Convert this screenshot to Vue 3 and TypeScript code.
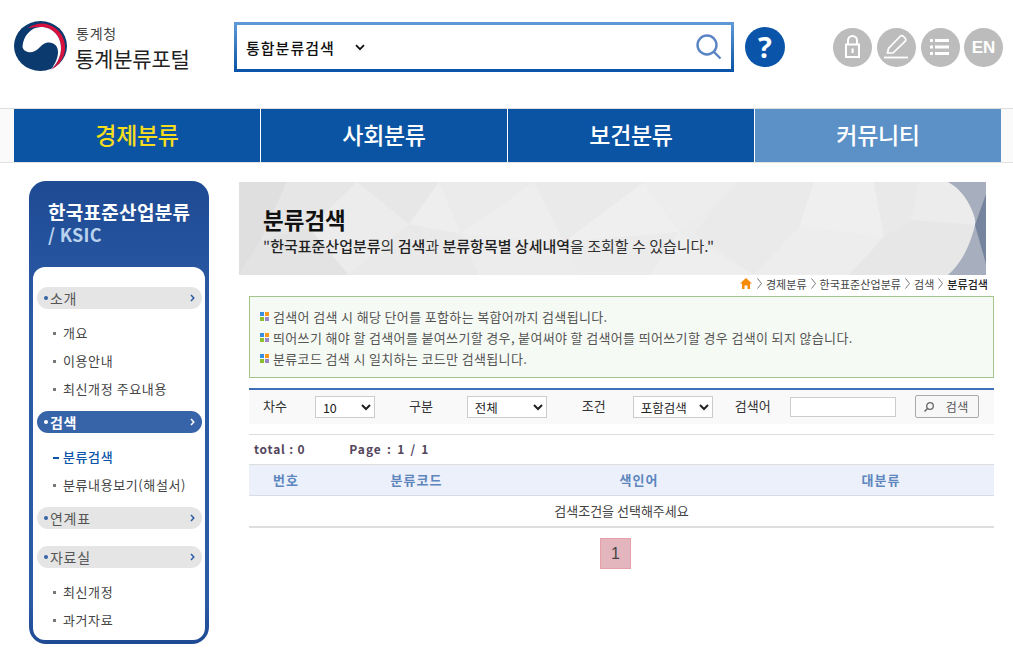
<script setup lang="ts">
const navItems = [
  { label: '경제분류', cls: 'nav__item--on' },
  { label: '사회분류', cls: '' },
  { label: '보건분류', cls: '' },
  { label: '커뮤니티', cls: 'nav__item--light' },
];

const sideMenu = [
  { title: '소개', on: false, subs: ['개요', '이용안내', '최신개정 주요내용'] },
  { title: '검색', on: true, subs: ['분류검색', '분류내용보기(해설서)'] },
  { title: '연계표', on: false, subs: [] },
  { title: '자료실', on: false, subs: ['최신개정', '과거자료'] },
];

const crumbs = ['경제분류', '한국표준산업분류', '검색'];

const notes = [
  '검색어 검색 시 해당 단어를 포함하는 복합어까지 검색됩니다.',
  '띄어쓰기 해야 할 검색어를 붙여쓰기할 경우, 붙여써야 할 검색어를 띄어쓰기할 경우 검색이 되지 않습니다.',
  '분류코드 검색 시 일치하는 코드만 검색됩니다.',
];

// banner background facets: [path, fill]
const facets = [
  ['M0 0h48L22 58 0 93Z', '#d6d6d6'],
  ['M48 0h70L70 46 22 58Z', '#e2e2e2'],
  ['M22 58 70 46 110 93H0Z', '#dcdcdc'],
  ['M118 0l52 42-60 51-40-47Z', '#ececec'],
  ['M118 0h82l-30 42Z', '#e4e4e4'],
  ['M200 0l22 52-52-10Z', '#f0f0f0'],
  ['M170 42l52 10 18 41H110Z', '#e8e8e8'],
  ['M200 0h95l-73 52Z', '#ebebeb'],
  ['M295 0l30 60-103-8Z', '#f1f1f1'],
  ['M222 52l103 8 15 33H240Z', '#ededed'],
  ['M295 0h110l-80 60Z', '#e9e9e9'],
  ['M405 0l35 50-115 10Z', '#f3f3f3'],
  ['M325 60l115-10-30 43H340Z', '#ebebeb'],
  ['M405 0h95l-60 50Z', '#eeeeee'],
  ['M500 0l-60 50 75 43H410l30-43Z', '#f0f0f0'],
  ['M500 0h75l-15 45-45 48-60-43Z', '#e9e9e9'],
  ['M575 0h60l10 55-85-10Z', '#f2f2f2'],
  ['M560 45l85 10-35 38h-95Z', '#eeeeee'],
  ['M635 0h45l-8 38-27 17Z', '#e7e7e7'],
  ['M680 0h34c10 8 17 20 22 43l-64-5Z', '#ececec'],
  ['M645 55l27-17 64 5-8 50H610Z', '#e4e4e4'],
];
</script>

<template>
  <div class="page">
    <header class="top">
      <div class="logo">
        <svg class="logo__mark" viewBox="0 0 53 50" width="53" height="50">
          <ellipse cx="26.500" cy="25" rx="26.500" ry="25" fill="#0b3a6e" />
          <path d="M14 7C20 3 28 1.500 34 3.500 46 7 52 18 51 29 50 38 44 45 37 49 43 43 47 35 47 27 47 15 38 6 27 6 22 6 18 6.500 14 7Z" fill="#d8123f" />
          <path d="M8.500 26C9 15 17 6 27 6 38 6 47 15 47 27 47 35 43 43 37 48.500 41 43 44 37 44 31 44 25 40 21.500 35 21.500 30 21.500 28 24 25 27 22 30 18 32 14 31 11 30.500 9 28.500 8.500 26Z" fill="#fff" />
        </svg>
        <div class="logo__text">
          <span class="logo__sub">통계청</span>
          <span class="logo__main">통계분류포털</span>
        </div>
      </div>

      <div class="search">
        <span class="search__type">통합분류검색</span>
        <svg class="search__chev" viewBox="0 0 10 7" width="10" height="7">
          <path d="M1 1.200 5 5.200 9 1.200" fill="none" stroke="#111" stroke-width="1.800" />
        </svg>
        <svg class="search__icon" viewBox="0 0 26 26" width="26" height="26">
          <circle cx="11" cy="11" r="9.500" fill="none" stroke="#5b84c4" stroke-width="2.400" />
          <path d="M18 18l6.500 6.500" stroke="#5b84c4" stroke-width="2.400" fill="none" />
        </svg>
      </div>

      <div class="help">?</div>

      <div class="tools">
        <span class="tool">
          <svg viewBox="0 0 39 39" width="39" height="39">
            <path d="M15 16v-3.500a4.500 4.500 0 0 1 9 0V16" fill="none" stroke="#fff" stroke-width="2" />
            <rect x="13" y="16.500" width="13" height="12.500" fill="none" stroke="#fff" stroke-width="2" />
            <rect x="18.500" y="20.500" width="2.200" height="4.500" fill="#fff" />
          </svg>
        </span>
        <span class="tool">
          <svg viewBox="0 0 39 39" width="39" height="39">
            <path d="M10.500 25l1-4.500L23 8.500c1-1 2.500-1 3.500 0l1.500 1.500c1 1 1 2.300 0 3.300L16 25Z" fill="none" stroke="#fff" stroke-width="1.700" />
            <path d="M7 29.500h24" stroke="#fff" stroke-width="1.800" />
          </svg>
        </span>
        <span class="tool">
          <svg viewBox="0 0 39 39" width="39" height="39">
            <path d="M9 12.500h3M9 19h3M9 25.500h3M14 12.500h14M14 19h14M14 25.500h14" stroke="#fff" stroke-width="2.800" fill="none" />
          </svg>
        </span>
        <span class="tool tool--text">EN</span>
      </div>
    </header>

    <nav class="nav">
      <div class="nav__inner">
        <a v-for="item in navItems" :key="item.label" class="nav__item" :class="item.cls">{{ item.label }}</a>
      </div>
    </nav>

    <div class="body">
      <aside class="side">
        <h2 class="side__title">한국표준산업분류<span>/ KSIC</span></h2>
        <div class="side__box">
          <div v-for="menu in sideMenu" :key="menu.title" class="group">
            <div class="group__head" :class="{ 'group__head--on': menu.on }">
              <span class="group__dot"></span>
              <span class="group__name">{{ menu.title }}</span>
              <svg class="group__arrow" viewBox="0 0 5 8" width="5" height="8">
                <path d="M1 1l2.800 3L1 7" fill="none" stroke="currentColor" stroke-width="1.500" />
              </svg>
            </div>
            <ul v-if="menu.subs.length" class="subs">
              <li v-for="sub in menu.subs" :key="sub" class="subs__item" :class="{ 'subs__item--on': sub === '분류검색' }">{{ sub }}</li>
            </ul>
          </div>
        </div>
      </aside>

      <main class="main">
        <section class="banner">
          <svg class="banner__bg" viewBox="0 0 747 93" width="747" height="93">
            <rect width="747" height="93" fill="#ececec" />
            <g opacity=".55">
              <path v-for="f in facets" :key="f[0]" :d="f[0]" :fill="f[1]" />
            </g>
            <path d="M709 0h38v93h-38c10-9 21-24 27-50 1-5-1-10-4-17-5-11-12-20-23-26Z" fill="#a7aebd" />
            <path d="M747 12v70l-11-39Z" fill="#76849e" />
          </svg>
          <div class="banner__text">
            <h1>분류검색</h1>
            <p>"<b>한국표준산업분류</b>의 <b>검색</b>과 <b>분류항목별 상세내역</b>을 조회할 수 있습니다."</p>
          </div>
        </section>

        <div class="crumbs">
          <svg class="crumbs__home" viewBox="0 0 12 11" width="12" height="11">
            <path d="M6 0 12 5.500H10V11H7.500V7.500h-3V11H2V5.500H0Z" fill="#f58a0b" />
          </svg>
          <template v-for="c in crumbs" :key="c">
            <svg class="crumbs__sep" viewBox="0 0 5 11" width="5" height="11">
              <path d="M.5 .5 4.500 5.500.5 10.500" fill="none" stroke="#666" stroke-width=".9" />
            </svg>
            <span>{{ c }}</span>
          </template>
          <svg class="crumbs__sep" viewBox="0 0 5 11" width="5" height="11">
            <path d="M.5 .5 4.500 5.500.5 10.500" fill="none" stroke="#666" stroke-width=".9" />
          </svg>
          <b>분류검색</b>
        </div>

        <div class="content">
          <div class="notes">
            <p v-for="note in notes" :key="note" class="notes__row">
              <span class="notes__icon"><i></i><i></i><i></i><i></i></span>{{ note }}
            </p>
          </div>

          <form class="filter" @submit.prevent>
            <label class="filter__label filter__label--first">차수</label>
            <select class="filter__sel filter__sel--num"><option>10</option></select>
            <label class="filter__label filter__label--kind">구분</label>
            <select class="filter__sel filter__sel--kind"><option>전체</option></select>
            <label class="filter__label filter__label--cond">조건</label>
            <select class="filter__sel filter__sel--cond"><option>포함검색</option></select>
            <label class="filter__label filter__label--word">검색어</label>
            <input class="filter__input" type="text" />
            <button class="filter__btn" type="button">
              <svg viewBox="0 0 12 12" width="12" height="12">
                <circle cx="7" cy="5" r="3.300" fill="none" stroke="#666" stroke-width="1.300" />
                <path d="M4.500 7.500 1.500 10.500" stroke="#666" stroke-width="1.500" />
              </svg>
              검색
            </button>
          </form>

          <div class="summary">
            <span class="summary__total">total : 0</span>
            <span class="summary__page">Page : 1 / 1</span>
          </div>

          <table class="result">
            <thead>
              <tr>
                <th class="col-no">번호</th>
                <th class="col-code">분류코드</th>
                <th class="col-word">색인어</th>
                <th>대분류</th>
              </tr>
            </thead>
            <tbody>
              <tr><td colspan="4">검색조건을 선택해주세요</td></tr>
            </tbody>
          </table>

          <div class="pager"><span>1</span></div>
        </div>
      </main>
    </div>
  </div>
</template>

<style>
html,
body {
  background: #fff;
}
</style>

<style scoped>
.page {
  width: 1013px;
  font-family: "Noto Sans CJK KR", "Liberation Sans", sans-serif;
  color: #333;
}

.top {
  display: flex;
  align-items: flex-start;
  height: 108px;
  box-sizing: border-box;
  padding: 21px 0 0 14px;
}

.logo {
  display: flex;
  width: 220px;
}

.logo__mark {
  flex: none;
}

.logo__text {
  display: flex;
  flex-direction: column;
  margin-left: 8px;
}

.logo__sub {
  margin-top: 3px;
  margin-left: 1px;
  color: #444;
  font-size: 14px;
  line-height: 18px;
  letter-spacing: 0.8px;
}

.logo__main {
  margin-top: 4px;
  color: #222;
  font-size: 21px;
  line-height: 24px;
  letter-spacing: -0.2px;
}

.search {
  display: flex;
  align-items: center;
  width: 500px;
  height: 50px;
  box-sizing: border-box;
  margin-top: 1px;
  padding-left: 9px;
  border: 3px solid;
  border-image: linear-gradient(#5f98d6, #0a55a9) 1;
}

.search__type {
  color: #111;
  font-size: 15px;
  font-weight: 500;
  letter-spacing: 1px;
}

.search__chev {
  margin-left: 20px;
}

.search__icon {
  margin-left: auto;
  margin-right: 9px;
}

.help {
  width: 40px;
  height: 40px;
  margin: 6px 0 0 11px;
  border-radius: 50%;
  background: #0a55a9;
  color: #fff;
  font: 700 29px/40px "Open Sans", sans-serif;
  text-align: center;
}

.tools {
  display: flex;
  gap: 5px;
  margin: 7px 0 0 48px;
}

.tool {
  width: 39px;
  height: 39px;
  border-radius: 50%;
  background: #bcbcbc;
  color: #fff;
}

.tool svg {
  display: block;
}

.tool--text {
  margin-left: -1px;
  font: 700 17px/39px "Liberation Sans", sans-serif;
  text-align: center;
}

.nav {
  height: 55px;
  box-sizing: border-box;
  border-top: 1px solid #ddd;
  border-bottom: 1px solid #e3e3e3;
  background: #fafafa;
}

.nav__inner {
  display: flex;
  gap: 1px;
  width: 987px;
  height: 53px;
  margin-left: 14px;
  background: #fff;
}

.nav__item {
  flex: 1;
  background: #0a54a3;
  color: #fff;
  font-size: 23px;
  font-weight: 500;
  line-height: 50px;
  text-align: center;
  letter-spacing: -0.3px;
}

.nav__item--on {
  color: #f5dc1c;
}

.nav__item--light {
  background: #5b91c6;
}

.body {
  display: flex;
  align-items: flex-start;
  padding: 18px 0 0 29px;
}

.side {
  display: flex;
  flex: none;
  flex-direction: column;
  width: 180px;
  height: 463px;
  box-sizing: border-box;
  padding: 0 4px 4px;
  border-radius: 17px;
  background: linear-gradient(#1e4a93, #2c5ba6 30%, #2c5ba6 90%, #1e4a93);
}

.side__title {
  flex: none;
  height: 86px;
  box-sizing: border-box;
  margin: 0;
  padding: 19px 0 0 15px;
  color: #fff;
  font-size: 19px;
  font-weight: 700;
  line-height: 24px;
  letter-spacing: 0.3px;
}

.side__title span {
  display: block;
  margin-top: -2px;
  color: #b9d3ee;
  font-size: 18px;
  font-weight: 700;
  line-height: 24px;
}

.side__box {
  flex: 1;
  min-height: 0;
  box-sizing: border-box;
  padding: 20px 3px 0 4px;
  border-radius: 12px;
  background: #fff;
}

.group__head {
  display: flex;
  align-items: center;
  height: 22px;
  padding: 0 7px;
  border-radius: 11px;
  background: #e5e5e5;
  color: #555;
  font-size: 14px;
  letter-spacing: 0.7px;
}

.group__head--on {
  background: #3763a9;
  color: #fff;
  font-weight: 700;
}

.group__dot {
  width: 4px;
  height: 4px;
  margin-right: 2px;
  border-radius: 50%;
  background: #3763a9;
}

.group__head--on .group__dot {
  background: #fff;
}

.group__arrow {
  margin-left: auto;
  color: #2c5ba6;
}

.group__head--on .group__arrow {
  color: #fff;
}

.subs {
  margin: 0;
  padding: 10px 0 8px 26px;
  list-style: none;
}

.group:last-child .subs {
  padding-bottom: 0;
}

.group:nth-child(3) {
  margin-bottom: 17px;
}

.subs__item {
  position: relative;
  height: 28px;
  color: #444;
  font-size: 13px;
  line-height: 28px;
  letter-spacing: 0.6px;
}

.subs__item::before {
  content: '';
  position: absolute;
  top: 13px;
  left: -10px;
  width: 3px;
  height: 3px;
  background: #777;
}

.subs__item--on {
  color: #0a55a9;
  font-weight: 500;
}

.subs__item--on::before {
  top: 14px;
  width: 6px;
  height: 2px;
  background: #0a55a9;
}

.main {
  flex: none;
  width: 755px;
  margin-left: 30px;
}

.banner {
  position: relative;
  width: 747px;
  height: 93px;
  margin-top: 1px;
}

.banner__bg {
  position: absolute;
  inset: 0;
}

.banner__text {
  position: relative;
  padding: 24px 0 0 24px;
}

.banner__text h1 {
  margin: 0;
  color: #111;
  font-size: 22.500px;
  font-weight: 700;
  line-height: 27px;
}

.banner__text p {
  margin: 3px 0 0;
  color: #333;
  font-size: 15px;
  line-height: 20px;
}

.banner__text b {
  color: #222;
  font-weight: 500;
}

.crumbs {
  display: flex;
  align-items: center;
  justify-content: flex-end;
  height: 21px;
  box-sizing: border-box;
  padding: 0 6px 4px 0;
  color: #444;
  font-size: 11px;
  letter-spacing: 0.05px;
}

.crumbs__sep {
  margin: 0 4px;
}

.crumbs__home + .crumbs__sep {
  margin-left: 5px;
}

.crumbs b {
  color: #222;
  font-weight: 500;
}

.content {
  margin-left: 10px;
}

.notes {
  height: 82px;
  box-sizing: border-box;
  padding: 9px 10px 0;
  border: 1px solid #a3c48c;
  background: #f6faf4;
}

.notes__row {
  display: flex;
  align-items: center;
  height: 21px;
  margin: 0;
  color: #555;
  font-size: 13px;
  letter-spacing: 0.35px;
}

.notes__icon {
  display: grid;
  grid-template-columns: 4px 4px;
  grid-auto-rows: 4px;
  gap: 1px;
  margin-right: 4px;
}

.notes__icon i:nth-child(1) {
  background: #3b8fe0;
}

.notes__icon i:nth-child(2) {
  background: #f59a1b;
}

.notes__icon i:nth-child(3) {
  background: #8cbf2e;
}

.notes__icon i:nth-child(4) {
  background: #9a86c8;
}

.filter {
  display: flex;
  align-items: center;
  height: 36px;
  box-sizing: border-box;
  margin-top: 10px;
  padding-bottom: 1px;
  border-top: 2px solid #3f6fb8;
  background: #f9f9f9;
  color: #333;
  font-size: 13px;
}

.filter__label {
  flex: none;
  margin-top: -2px;
}

.filter__label--first {
  margin-left: 14px;
}

.filter__label--kind {
  margin-left: 34px;
}

.filter__label--cond {
  margin-left: 35px;
}

.filter__label--word {
  margin-left: 22px;
}

.filter__sel {
  height: 22px;
  box-sizing: border-box;
  padding-left: 3px;
  border: 1px solid #ccc;
  background: #fff;
  color: #222;
  font: 12.500px "Noto Sans CJK KR", sans-serif;
}

.filter__sel--num {
  width: 60px;
  margin-left: 28px;
}

.filter__sel--kind {
  width: 80px;
  margin-left: 34px;
}

.filter__sel--cond {
  width: 80px;
  margin-left: 27px;
}

.filter__input {
  width: 106px;
  height: 20px;
  box-sizing: border-box;
  margin-left: 19px;
  border: 1px solid #ccc;
  background: #fff;
}

.filter__btn {
  display: flex;
  align-items: center;
  gap: 11px;
  width: 64px;
  height: 23px;
  box-sizing: border-box;
  margin-left: 19px;
  padding: 0 0 0 7px;
  border: 1px solid #aaa;
  border-radius: 2px;
  background: #f7f7f7;
  color: #555;
  font: 12px "Noto Sans CJK KR", sans-serif;
  letter-spacing: 0.5px;
}

.summary {
  display: flex;
  gap: 44px;
  height: 31px;
  box-sizing: border-box;
  margin-top: 10px;
  padding-left: 5px;
  border-top: 1px solid #ddd;
  border-bottom: 1px solid #ddd;
  color: #54465c;
  font-size: 12px;
  font-weight: 700;
  line-height: 28px;
}

.summary__total {
  letter-spacing: 0.8px;
}

.summary__page {
  letter-spacing: 1px;
  word-spacing: 1.500px;
}

.result {
  width: 745px;
  border-collapse: collapse;
  table-layout: fixed;
  font-size: 13px;
}

.result th {
  height: 30px;
  box-sizing: border-box;
  padding: 0;
  border-bottom: 1px solid #d8dce4;
  background: #ebf0fb;
  color: #5d86bd;
  font-weight: 700;
  letter-spacing: 1px;
}

.col-no {
  width: 74px;
}

.col-code {
  width: 187px;
}

.col-word {
  width: 258px;
}

.result td {
  height: 32px;
  box-sizing: border-box;
  padding: 0;
  border-bottom: 2px solid #ddd;
  color: #444;
  text-align: center;
}

.pager {
  display: flex;
  justify-content: center;
  margin-top: 10px;
  padding-right: 12px;
}

.pager span {
  width: 31px;
  height: 31px;
  box-sizing: border-box;
  border: 1px solid #e5a0aa;
  background: #e3b6bd;
  color: #444;
  font: 16px/29px "Liberation Sans", sans-serif;
  text-align: center;
}
</style>
